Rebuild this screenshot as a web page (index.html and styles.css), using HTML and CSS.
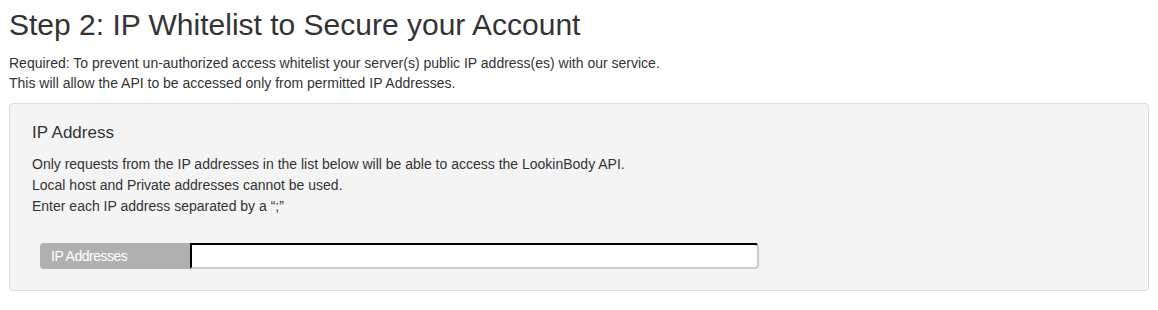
FILE: index.html
```html
<!DOCTYPE html>
<html lang="en">
<head>
  <meta charset="UTF-8">
  <title>IP Whitelist</title>
  <link rel="stylesheet" href="styles.css">
</head>
<body>
  <h1>Step 2: IP Whitelist to Secure your Account</h1>
  <p class="intro">Required: To prevent un-authorized access whitelist your server(s) public IP address(es) with our service.<br>
  This will allow the API to be accessed only from permitted IP Addresses.</p>

  <div class="panel">
    <h3>IP Address</h3>
    <p class="note">Only requests from the IP addresses in the list below will be able to access the LookinBody API.<br>
    Local host and Private addresses cannot be used.<br>
    Enter each IP address separated by a “;”</p>

    <div class="ip-row">
      <span class="ip-label">IP Addresses</span>
      <input type="text" class="ip-input" name="ips">
    </div>
  </div>
</body>
</html>
```
FILE: styles.css
```css
body { font-family: "Liberation Sans", Arial, sans-serif; color: #333; margin: 0; padding: 5px 9px; }
h1 { font-size: 30px; font-weight: normal; margin: 2px 0 10px; line-height: 36px; }
.intro { font-size: 14px; line-height: 20px; margin: 0 0 10px; }
.panel { background: #f4f4f4; border: 1px solid #ddd; border-radius: 4px; padding: 18px 18px 21px 22px; }
.panel h3 { font-size: 17px; font-weight: normal; margin: 0 0 10px; line-height: 22px; }
.note { font-size: 14px; line-height: 21px; margin: 0 0 26px; }
.ip-row { display: flex; width: 719px; margin-left: 8px; height: 26px; }
.ip-label { background: #b0b0b0; color: #fff; font-size: 14px; letter-spacing: -0.5px; width: 139px; padding-left: 11px; line-height: 26px; border-radius: 4px 0 0 4px; }
.ip-input { flex: 1; margin: 0; border: 2px inset #767676; border-right-color: #ccc; border-bottom-color: #ccc; border-top-color: #222; border-left-color: #222; border-radius: 0 4px 4px 0; background: #fff; padding: 0 4px; }
```
